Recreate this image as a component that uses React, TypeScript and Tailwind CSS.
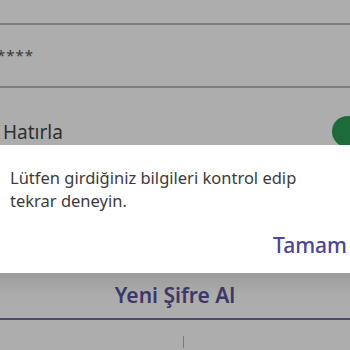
import React from 'react';

// Giriş ekranı, üstünde hata diyaloğu açık
export default function App() {
  return (
    <div className="relative h-[350px] w-[350px] overflow-hidden bg-[#adadad] font-['Noto_Sans',sans-serif]">
      {/* Kullanıcı alanı */}
      <div className="h-[25px] border-b-2 border-[#7e7e7e]" />

      {/* Şifre alanı */}
      <div className="flex h-[63px] items-center border-b-2 border-[#7e7e7e]">
        <span className="-ml-[3px] text-[15px] tracking-[1px] text-[#3a3a3a]">****</span>
      </div>

      {/* Hatırla satırı */}
      <div className="relative h-[57px] overflow-hidden">
        <span className="absolute left-[3px] top-[32px] text-[19px] leading-[24px] text-[#2f2f2f]">Hatırla</span>
        <div className="absolute left-[332px] top-[28px] h-[31px] w-[31px] rounded-full bg-[#1d6a3a]" />
      </div>

      {/* Hata diyaloğu */}
      <div className="h-[128px] bg-white pl-[10px] pt-[21px]">
        <p className="text-[16.5px] leading-[23px] text-[#3b3b3b]">
          Lütfen girdiğiniz bilgileri kontrol edip
          <br />
          tekrar deneyin.
        </p>
        <div className="mt-[20px] flex justify-end pr-[3px]">
          <span className="text-[21px] font-medium leading-[26px] text-[#4b4592]">Tamam</span>
        </div>
      </div>

      {/* Yeni şifre butonu */}
      <div className="flex h-[47px] items-center justify-center border-b-2 border-[#4e4a72] bg-gradient-to-b from-[#9c9c9c] via-[#acacac] to-[#adadad]">
        <span className="text-[21px] font-semibold text-[#3c3867]">Yeni Şifre Al</span>
      </div>

      <div className="flex h-[28px] justify-center">
        <div className="ml-[16px] mt-[16px] h-[12px] w-[1px] bg-[#7a7a7a]" />
      </div>
    </div>
  );
}
